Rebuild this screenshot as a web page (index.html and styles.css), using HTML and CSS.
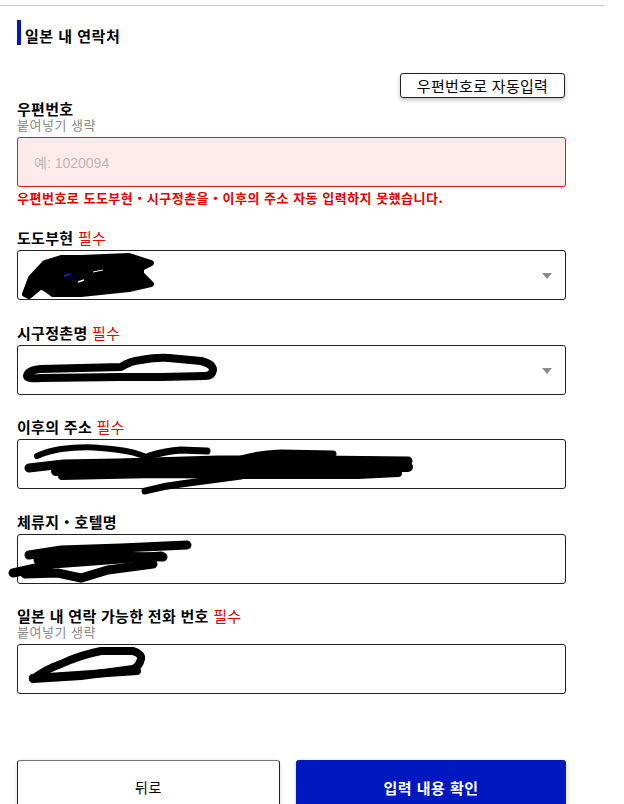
FILE: index.html
```html
<!DOCTYPE html>
<html lang="ko">
<head>
<meta charset="utf-8">
<link rel="stylesheet" href="styles.css">
</head>
<body>
<div class="page">
  <div class="rule"></div>
  <div class="content">
    <h2 class="section-title">일본 내 연락처</h2>

    <div class="auto-row"><button class="auto-btn" type="button">우편번호로 자동입력</button></div>

    <div class="field field-first">
      <div class="label label-tight">우편번호</div>
      <div class="sub">붙여넣기 생략</div>
      <div class="box box-error"><span class="placeholder">예: 1020094</span></div>
      <div class="error">우편번호로 도도부현・시구정촌을・이후의 주소 자동 입력하지 못했습니다.</div>
    </div>

    <div class="field field-after-error">
      <div class="label">도도부현 <span class="req">필수</span></div>
      <div class="box select">
        <svg class="scribble" width="560" height="60" viewBox="0 0 560 60">
          <path d="M7 43 L13 27 L27 12 L43 7 L63 7 L111 5 L133 12 L123 17 L123 23 L133 33 L111 38 L63 43 L35 43 L31 40 L23 35 L11 45 Z" fill="#000" stroke="#000" stroke-width="6" stroke-linejoin="round"/>
          <path d="M46 25 L52 23" stroke="#2020ff" stroke-width="1.5"/>
          <path d="M75 21 L85 19" stroke="#fff" stroke-width="1"/>
          <path d="M60 31 L66 29" stroke="#fff" stroke-width="1.5"/>
        </svg>
        <span class="arrow"></span>
      </div>
    </div>

    <div class="field">
      <div class="label">시구정촌명 <span class="req">필수</span></div>
      <div class="box select">
        <svg class="scribble" width="560" height="60" viewBox="0 0 560 60">
          <path d="M9 30 Q10 24 23 23 L103 21 Q112 15 123 14 Q140 11 151 12 L183 15 Q195 18 195 24 Q194 30 187 30 L143 31 L103 31 L23 32 Q9 33 9 30 Z" fill="none" stroke="#000" stroke-width="8" stroke-linejoin="round" stroke-linecap="round"/>
        </svg>
        <span class="arrow"></span>
      </div>
    </div>

    <div class="field field-snug">
      <div class="label">이후의 주소 <span class="req">필수</span></div>
      <div class="box">
        <svg class="scribble" width="560" height="60" viewBox="0 0 560 60">
          <path d="M19 16 Q30 11 43 9 Q65 6 83 8 Q110 10 123 15 Q135 19 143 24" fill="none" stroke="#000" stroke-width="6" stroke-linecap="round"/>
          <path d="M131 16 Q148 11 163 10 L189 11" fill="none" stroke="#000" stroke-width="7" stroke-linecap="round"/>
          <path d="M223 19 Q240 14 263 13 L315 14" fill="none" stroke="#000" stroke-width="7" stroke-linecap="round"/>
          <path d="M11 28 L45 24 L100 23 L200 20 L300 20 L390 21" fill="none" stroke="#000" stroke-width="9" stroke-linecap="round"/>
          <path d="M38 31 L100 29 L200 28 L300 27 L390 27" fill="none" stroke="#000" stroke-width="10" stroke-linecap="round"/>
          <path d="M44 36 L90 35 L140 34 L230 35 L340 35 L380 33" fill="none" stroke="#000" stroke-width="8" stroke-linecap="round"/>
          <path d="M127 51 Q145 46 163 44 L223 36" fill="none" stroke="#000" stroke-width="7" stroke-linecap="round"/>
        </svg>
      </div>
    </div>

    <div class="field">
      <div class="label">체류지・호텔명</div>
      <div class="box">
        <svg class="scribble" width="560" height="60" viewBox="0 0 560 60">
          <path d="M11 20 L43 15 L103 13 L169 10" fill="none" stroke="#000" stroke-width="9" stroke-linecap="round"/>
          <path d="M20 25 L80 21 L145 22" fill="none" stroke="#000" stroke-width="9" stroke-linecap="round"/>
          <path d="M-5 38 L35 29 L143 21" fill="none" stroke="#000" stroke-width="9" stroke-linecap="round"/>
          <path d="M7 39 L40 38 L63 43 L90 35 L135 29" fill="none" stroke="#000" stroke-width="9" stroke-linecap="round"/>
        </svg>
      </div>
    </div>

    <div class="field field-snug">
      <div class="label label-tight">일본 내 연락 가능한 전화 번호 <span class="req">필수</span></div>
      <div class="sub">붙여넣기 생략</div>
      <div class="box">
        <svg class="scribble" width="560" height="60" viewBox="0 0 560 60">
          <path d="M15 34 Q28 24 43 19 Q62 10 83 6 L115 6 Q124 9 123 14 Q121 22 115 24 L63 31 L15 34" fill="none" stroke="#000" stroke-width="8" stroke-linejoin="round" stroke-linecap="round"/>
          <path d="M15 33 L119 26" fill="none" stroke="#000" stroke-width="8" stroke-linecap="round"/>
        </svg>
      </div>
    </div>

    <div class="actions">
      <button class="btn btn-back" type="button">뒤로</button>
      <button class="btn btn-confirm" type="button">입력 내용 확인</button>
    </div>
  </div>
</div>
</body>
</html>
```

FILE: styles.css
```css
* { box-sizing: border-box; }

html, body {
  margin: 0;
  padding: 0;
  background: #fff;
}

body {
  font-family: "Noto Sans CJK KR", "Noto Sans", sans-serif;
  color: #111;
  overflow: hidden;
}

.page {
  width: 624px;
  padding-top: 5px;
}

.rule {
  width: 605px;
  height: 1px;
  background: #cccccc;
}

.content {
  padding: 0 58px 0 17px;
}

.section-title {
  margin: 14px 0 0 0;
  height: 25px;
  border-left: 4px solid #0018c4;
  padding-left: 4px;
  font-size: 15px;
  font-weight: 700;
  letter-spacing: 0.5px;
  line-height: 32px;
  color: #000;
  white-space: nowrap;
}

.auto-row {
  display: flex;
  justify-content: flex-end;
  margin-top: 28px;
  padding-right: 1px;
}

.auto-btn {
  height: 25px;
  width: 165px;
  padding: 0;
  background: #fff;
  border: 1px solid #222;
  border-radius: 3px;
  box-shadow: 0 2px 4px rgba(0,0,0,0.25);
  font-family: "Noto Sans CJK KR", sans-serif;
  font-size: 15px;
  letter-spacing: 0.3px;
  color: #000;
  line-height: 23px;
}

.field {
  margin-top: 24px;
}

.field-snug {
  margin-top: 23px;
}

.field-first {
  margin-top: 2px;
}

.field-after-error {
  margin-top: 23px;
}

.label {
  font-size: 15px;
  font-weight: 700;
  letter-spacing: 0.3px;
  line-height: 17px;
  color: #000;
  margin-bottom: 4px;
  white-space: nowrap;
}

.label-tight {
  margin-bottom: 0;
}

.req {
  color: #e60000;
  font-weight: 400;
}

.sub {
  font-size: 13px;
  letter-spacing: 0.5px;
  line-height: 15px;
  color: #888;
  margin-bottom: 5px;
}

.box {
  position: relative;
  height: 50px;
  border: 1px solid #222;
  border-radius: 3px;
  background: #fff;
  display: flex;
  align-items: center;
}

.box-error {
  border-color: #e31b1b;
  background: #fdeaea;
}

.placeholder {
  padding-left: 16px;
  font-family: "Liberation Sans", "Noto Sans CJK KR", sans-serif;
  font-size: 14px;
  color: #b9b9b9;
}

.error {
  margin-top: 3px;
  font-size: 13px;
  font-weight: 700;
  letter-spacing: 0.5px;
  line-height: 16px;
  color: #e60000;
  white-space: nowrap;
}

.scribble {
  position: absolute;
  left: 0;
  top: 0;
  overflow: visible;
}

.arrow {
  position: absolute;
  right: 13px;
  top: 22px;
  width: 0;
  height: 0;
  border-left: 5px solid transparent;
  border-right: 5px solid transparent;
  border-top: 6px solid #8a8a8a;
}

.actions {
  display: grid;
  grid-template-columns: 263px 270px;
  column-gap: 16px;
  margin-top: 66px;
}

.btn {
  height: 54px;
  border-radius: 3px;
  font-family: "Noto Sans CJK KR", sans-serif;
  font-size: 14px;
  letter-spacing: 0.5px;
  padding: 0;
}

.btn-back {
  background: #fff;
  border: 1px solid #222;
  border-top-color: #777;
  color: #000;
  box-shadow: 0 1px 4px rgba(0,0,0,0.15);
}

.btn-confirm {
  background: #0018c0;
  border: none;
  color: #fff;
  font-size: 15px;
  font-weight: 700;
  box-shadow: 0 1px 4px rgba(0,0,0,0.2);
}
```
